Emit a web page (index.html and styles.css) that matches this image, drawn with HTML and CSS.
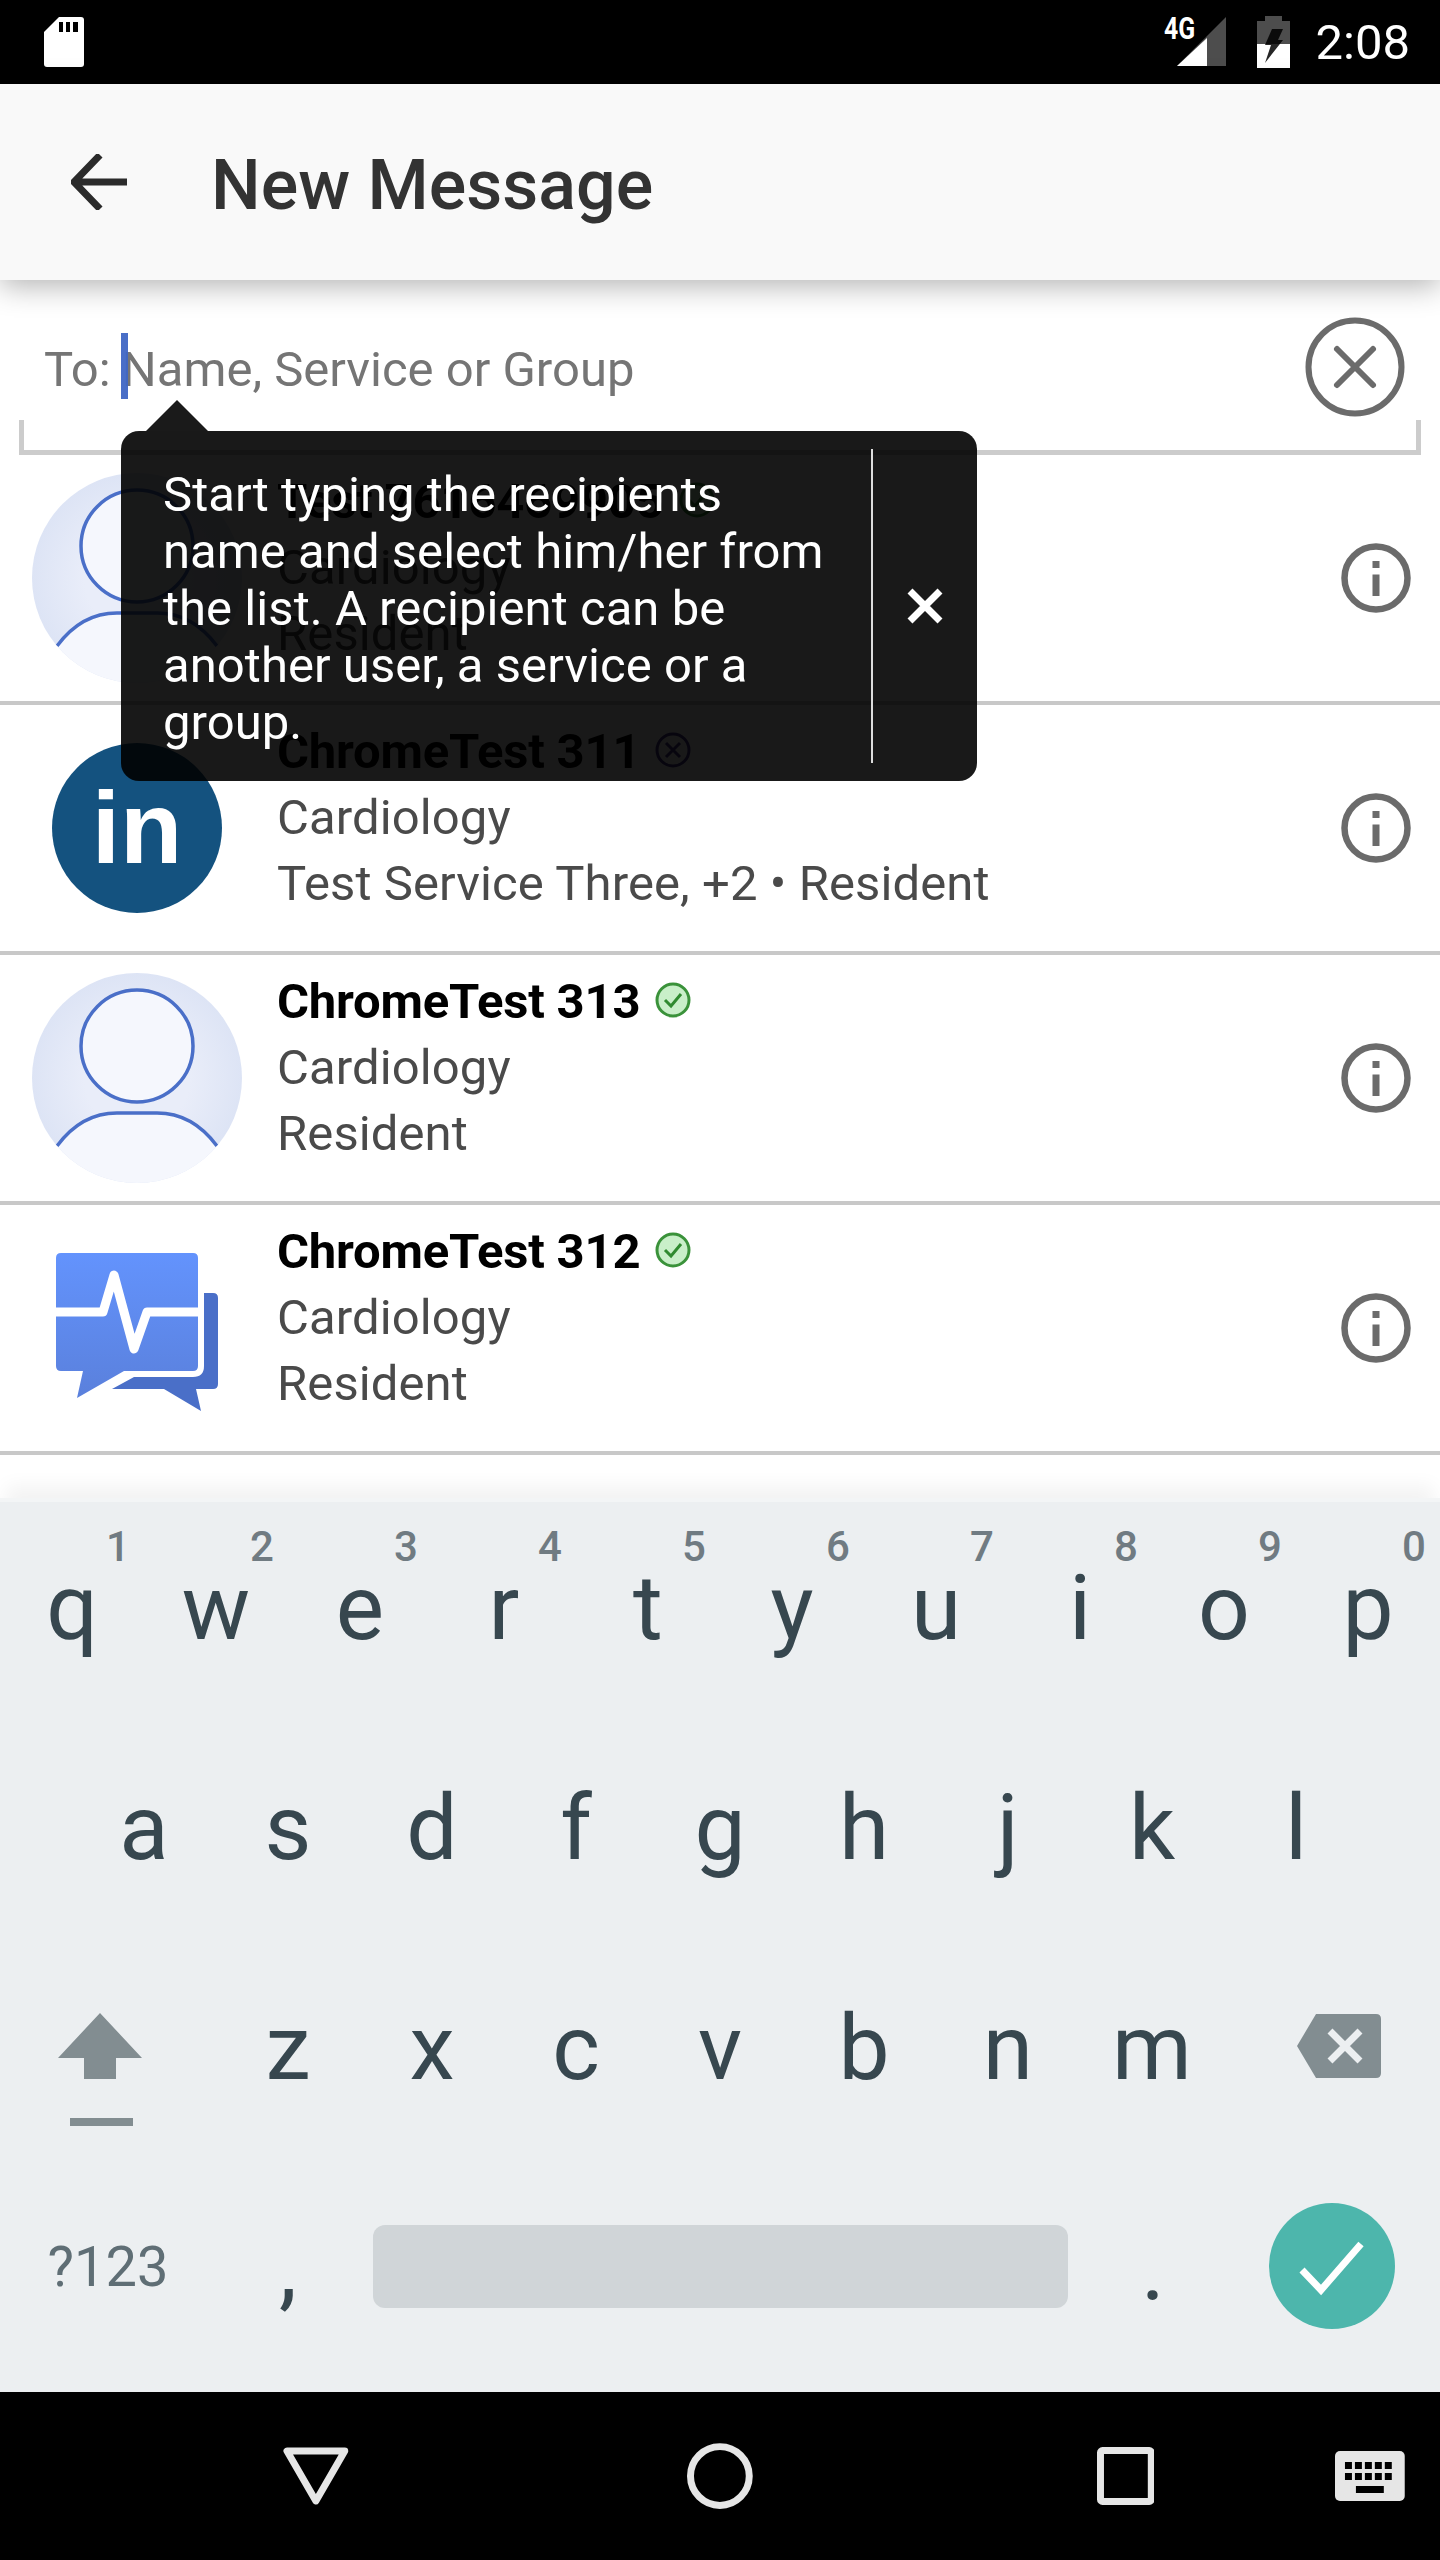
FILE: index.html
```html
<!DOCTYPE html>
<html lang="en">
<head>
    <meta charset="UTF-8">
    <title>New Message</title>
    <link rel="stylesheet" href="styles.css">
</head>
<body>
<div class="phone">
    <div class="status-bar">
        <svg class="sd-icon" width="40" height="50" viewBox="0 0 40 50"><path d="M15 0H37Q40 0 40 3V47Q40 50 37 50H3Q0 50 0 47V15Z" fill="#fff"/><path d="M15 5h4v10h-4zM22 5h4v10h-4zM29 5h5v10h-5z" fill="#000"/></svg>
        <div class="status-right">
            <div class="signal">
                <span class="net-type">4G</span>
                <svg width="50" height="50" viewBox="0 0 50 50"><path d="M49 0V49H0Z" fill="#4d4d4d"/><path d="M30 21V49H0Z" fill="#fff"/></svg>
            </div>
            <svg class="battery" width="33" height="52" viewBox="0 0 33 52"><path d="M8 0H25V5H33V52H0V5H8Z" fill="#4d4d4d"/><path d="M0 28H33V52H0Z" fill="#fff"/><path d="M15 13H26L21 24H26L8 47L14 29H8Z" fill="#000" opacity=".85"/></svg>
            <span class="clock">2:08</span>
        </div>
    </div>

    <div class="app-bar">
        <svg class="back-icon" width="56" height="56" viewBox="0 0 56 56"><path d="M2 28H56M29 1L3 28L29 55" fill="none" stroke="#2b2b2b" stroke-width="7"/></svg>
        <h1 class="title">New Message</h1>
    </div>

    <div class="to-field">
        <div class="to-row">
            <div class="to-text">To: <span class="cursor"></span>Name, Service or Group</div>
            <svg class="clear-icon" width="100" height="100" viewBox="0 0 100 100"><circle cx="50" cy="50" r="46.5" fill="none" stroke="#6b6b6b" stroke-width="6"/><path d="M32 32L68 68M68 32L32 68" stroke="#6b6b6b" stroke-width="6" stroke-linecap="round"/></svg>
        </div>
        <div class="to-bracket"></div>
    </div>

    <div class="list">
        <div class="row">
            <svg class="avatar" width="210" height="210" viewBox="0 0 210 210"><use href="#person"/></svg>
            <div class="info">
                <div class="name">Test 7616469905 <svg class="presence" width="36" height="36" viewBox="0 0 36 36"><use href="#online"/></svg></div>
                <div class="line">Cardiology</div>
                <div class="line">Resident</div>
            </div>
            <svg class="info-icon" width="72" height="72" viewBox="0 0 72 72"><use href="#info"/></svg>
        </div>
        <div class="row">
            <div class="avatar linkedin"><span class="in">in</span></div>
            <div class="info">
                <div class="name">ChromeTest 311 <svg class="presence" width="36" height="36" viewBox="0 0 36 36"><circle cx="18" cy="18" r="16" fill="none" stroke="#4a3a8a" stroke-width="3"/><path d="M11 11L25 25M25 11L11 25" stroke="#4a3a8a" stroke-width="3"/></svg></div>
                <div class="line">Cardiology</div>
                <div class="line">Test Service Three, +2 • Resident</div>
            </div>
            <svg class="info-icon" width="72" height="72" viewBox="0 0 72 72"><use href="#info"/></svg>
        </div>
        <div class="row">
            <svg class="avatar" width="210" height="210" viewBox="0 0 210 210"><use href="#person"/></svg>
            <div class="info">
                <div class="name">ChromeTest 313 <svg class="presence" width="36" height="36" viewBox="0 0 36 36"><use href="#online"/></svg></div>
                <div class="line">Cardiology</div>
                <div class="line">Resident</div>
            </div>
            <svg class="info-icon" width="72" height="72" viewBox="0 0 72 72"><use href="#info"/></svg>
        </div>
        <div class="row">
            <svg class="avatar" width="210" height="210" viewBox="0 0 210 210">
                <defs><linearGradient id="blue" x1="0" y1="0" x2="0" y2="1"><stop offset="0" stop-color="#6393fd"/><stop offset="1" stop-color="#5a80dc"/></linearGradient></defs>
                <path d="M80 166L102 154H161Q172 154 172 143V70H181Q186 70 186 75V161Q186 166 181 166H164L169 188L132 166Z" fill="#4a6fc8"/>
                <path d="M29 30H161Q166 30 166 35V143Q166 148 161 148H92L45 175L51 148H29Q24 148 24 143V35Q24 30 29 30Z" fill="url(#blue)"/>
                <path d="M24 89H71L82 52L102 126L115 89H166" fill="none" stroke="#fff" stroke-width="9" stroke-linejoin="round"/>
            </svg>
            <div class="info">
                <div class="name">ChromeTest 312 <svg class="presence" width="36" height="36" viewBox="0 0 36 36"><use href="#online"/></svg></div>
                <div class="line">Cardiology</div>
                <div class="line">Resident</div>
            </div>
            <svg class="info-icon" width="72" height="72" viewBox="0 0 72 72"><use href="#info"/></svg>
        </div>

        <div class="tooltip">
            <div class="tooltip-arrow"></div>
            <div class="tooltip-text">Start typing the recipients name and select him/her from the list. A recipient can be another user, a service or a group.</div>
            <div class="tooltip-close">
                <svg width="36" height="36" viewBox="0 0 36 36"><path d="M3 3L33 33M33 3L3 33" stroke="#fff" stroke-width="7"/></svg>
            </div>
        </div>
    </div>

    <div class="keyboard">
        <div class="key-row top-row">
            <div class="key"><sup class="hint">1</sup>q</div>
            <div class="key"><sup class="hint">2</sup>w</div>
            <div class="key"><sup class="hint">3</sup>e</div>
            <div class="key"><sup class="hint">4</sup>r</div>
            <div class="key"><sup class="hint">5</sup>t</div>
            <div class="key"><sup class="hint">6</sup>y</div>
            <div class="key"><sup class="hint">7</sup>u</div>
            <div class="key"><sup class="hint">8</sup>i</div>
            <div class="key"><sup class="hint">9</sup>o</div>
            <div class="key"><sup class="hint">0</sup>p</div>
        </div>
        <div class="key-row home-row">
            <div class="key">a</div>
            <div class="key">s</div>
            <div class="key">d</div>
            <div class="key">f</div>
            <div class="key">g</div>
            <div class="key">h</div>
            <div class="key">j</div>
            <div class="key">k</div>
            <div class="key">l</div>
        </div>
        <div class="key-row shift-row">
            <div class="key wide-key">
                <svg class="shift-icon" width="84" height="114" viewBox="0 0 84 114"><path d="M42 0L84 45H58V66H26V45H0Z" fill="#828d91"/><path d="M12 105H75V113H12Z" fill="#828d91"/></svg>
            </div>
            <div class="key">z</div>
            <div class="key">x</div>
            <div class="key">c</div>
            <div class="key">v</div>
            <div class="key">b</div>
            <div class="key">n</div>
            <div class="key">m</div>
            <div class="key wide-key">
                <svg class="backspace-icon" width="84" height="64" viewBox="0 0 84 64"><path d="M19 0H79Q84 0 84 5V59Q84 64 79 64H19L0 32Z" fill="#828d91"/><path d="M33 17L63 47M63 17L33 47" stroke="#eceff1" stroke-width="7"/></svg>
            </div>
        </div>
        <div class="bottom-row">
            <div class="sym-key">?123</div>
            <div class="punct-key">,</div>
            <div class="space-key"></div>
            <div class="punct-key">.</div>
            <div class="enter-key">
                <svg width="126" height="126" viewBox="0 0 126 126"><circle cx="63" cy="63" r="63" fill="#4db6ac"/><path d="M33 67L52 87L92 41" fill="none" stroke="#fff" stroke-width="7"/></svg>
            </div>
        </div>
    </div>

    <div class="nav-bar">
        <svg class="nav-back" width="66" height="58" viewBox="0 0 66 58"><path d="M4 4H62L33 54Z" fill="none" stroke="#e6e6e6" stroke-width="7" stroke-linejoin="round"/></svg>
        <svg class="nav-home" width="66" height="66" viewBox="0 0 66 66"><circle cx="33" cy="33" r="29.5" fill="none" stroke="#e6e6e6" stroke-width="7"/></svg>
        <svg class="nav-recent" width="58" height="58" viewBox="0 0 58 58"><rect x="3.5" y="3.5" width="51" height="51" rx="2" fill="none" stroke="#e6e6e6" stroke-width="7"/></svg>
        <svg class="nav-keyboard" width="70" height="50" viewBox="0 0 70 50"><rect width="70" height="50" rx="5" fill="#e6e6e6"/><path d="M10 11h7v7h-7zM20 11h7v7h-7zM30 11h7v7h-7zM40 11h7v7h-7zM50 11h7v7h-7zM10 22h7v7h-7zM20 22h7v7h-7zM30 22h7v7h-7zM40 22h7v7h-7zM50 22h7v7h-7zM21 35h28v7H21z" fill="#000"/></svg>
    </div>
</div>

<svg class="sprites" width="0" height="0">
    <defs>
        <clipPath id="disc"><circle cx="105" cy="105" r="105"/></clipPath>
        <radialGradient id="halo"><stop offset="0.5" stop-color="#e9edf9"/><stop offset="1" stop-color="#dde4f5"/></radialGradient>
        <g id="person">
            <circle cx="105" cy="105" r="105" fill="url(#halo)"/>
            <g clip-path="url(#disc)">
                <path d="M25 173C42 150 62 140 85 140H125C148 140 168 150 185 173V210H25Z" fill="#f5f7fd"/>
                <path d="M25 173C42 150 62 140 85 140H125C148 140 168 150 185 173" fill="none" stroke="#4a6fc8" stroke-width="3.5"/>
            </g>
            <circle cx="105" cy="73" r="56" fill="#f5f7fd" stroke="#4a6fc8" stroke-width="3.5"/>
        </g>
        <g id="online">
            <circle cx="18" cy="18" r="16" fill="#c9efc9" stroke="#3a923a" stroke-width="3"/>
            <path d="M10 18L16 24L26 12" fill="none" stroke="#2f8a2f" stroke-width="3"/>
        </g>
        <g id="info">
            <circle cx="36" cy="36" r="31.5" fill="none" stroke="#6b6b6b" stroke-width="6.5"/>
            <path d="M32.5 19H39.5V26H32.5ZM32.5 32.5H39.5V54H32.5Z" fill="#6b6b6b"/>
        </g>
    </defs>
</svg>
</body>
</html>
```

FILE: styles.css
```css
* {
    box-sizing: border-box;
}

body {
    margin: 0;
    background-color: #fff;
    font-family: Roboto, sans-serif;
}

.sprites {
    position: absolute;
}

.phone {
    width: 1440px;
    height: 2560px;
    display: flex;
    flex-direction: column;
    overflow: hidden;
}

/* status bar */
.status-bar {
    height: 84px;
    background-color: #000;
    display: flex;
    justify-content: space-between;
    align-items: flex-start;
    padding: 17px 30px 0 44px;
}

.status-right {
    display: flex;
    align-items: flex-start;
}

.signal {
    width: 62px;
    height: 50px;
    position: relative;
    display: flex;
    justify-content: flex-end;
}

.net-type {
    position: absolute;
    left: -1px;
    top: -7px;
    color: #fff;
    font-size: 31px;
    font-weight: 700;
    transform: scaleX(0.8);
    transform-origin: left top;
}

.battery {
    margin: -1px 0 0 30px;
}

.clock {
    margin-left: 26px;
    color: #fff;
    font-size: 49px;
    line-height: 52px;
}

/* app bar */
.app-bar {
    height: 196px;
    background-color: #f9f9f9;
    display: flex;
    align-items: center;
    padding-left: 71px;
    box-shadow: 0 6px 28px rgba(0, 0, 0, 0.3);
    position: relative;
    z-index: 1;
}

.back-icon {
    margin-top: -1px;
}

.title {
    margin: 6px 0 0 84px;
    font-size: 70px;
    font-weight: 500;
    color: #333;
    line-height: 80px;
}

/* to field */
.to-field {
    height: 175px;
    flex: none;
}

.to-row {
    height: 140px;
    padding: 0 35px 0 44px;
    display: flex;
    justify-content: space-between;
    align-items: flex-start;
}

.to-bracket {
    height: 35px;
    margin: 0 19px;
    border: solid #ccc;
    border-width: 0 5px 5px;
}

.to-text {
    font-size: 49px;
    color: #757575;
    margin-top: 60px;
    line-height: 60px;
    white-space: nowrap;
}

.cursor {
    display: inline-block;
    width: 7px;
    height: 66px;
    margin: -10px -6px -10px -2px;
    vertical-align: -3px;
    background-color: #3f66c4;
    opacity: 0.95;
}

.clear-icon {
    margin-top: 37px;
}

/* recipients */
.list {
    position: relative;
    height: 1043px;
    flex: none;
}

.row {
    height: 250px;
    border-bottom: 4px solid #c8c8c8;
    display: flex;
    align-items: center;
    padding: 0 28px 0 32px;
}

.avatar {
    flex: none;
    width: 210px;
    height: 210px;
}

.linkedin {
    display: flex;
    justify-content: center;
    align-items: center;
}

.in {
    width: 170px;
    height: 170px;
    border-radius: 50%;
    background-color: #14527f;
    color: #fff;
    font-family: "Liberation Sans", sans-serif;
    font-weight: 700;
    font-size: 102px;
    line-height: 170px;
    text-align: center;
}

.info {
    flex: 1;
    margin-left: 35px;
    padding-bottom: 20px;
}

.name {
    font-size: 49px;
    font-weight: 700;
    letter-spacing: -0.2px;
    color: #000;
    line-height: 66px;
    display: flex;
    align-items: center;
    gap: 15px;
}

.presence {
    margin-top: -4px;
}

.line {
    font-size: 49px;
    letter-spacing: 0.1px;
    color: #4a4a4a;
    line-height: 66px;
}

.info-icon {
    flex: none;
}

/* tooltip over the list */
.tooltip {
    position: absolute;
    left: 121px;
    top: -24px;
    width: 856px;
    height: 350px;
    background-color: rgba(0, 0, 0, 0.9);
    border-radius: 18px;
    display: flex;
    z-index: 2;
}

.tooltip-arrow {
    position: absolute;
    left: 25px;
    top: -31px;
    width: 0;
    height: 0;
    border-left: 31px solid transparent;
    border-right: 31px solid transparent;
    border-bottom: 31px solid #1a1a1a;
}

.tooltip-text {
    width: 750px;
    padding: 35px 38px 0 42px;
    font-size: 49px;
    letter-spacing: 0.05px;
    line-height: 57px;
    color: #fff;
}

.tooltip-close {
    flex: 1;
    margin: 18px 0;
    border-left: 2px solid #ddd;
    display: flex;
    justify-content: center;
    align-items: center;
}

/* keyboard */
.keyboard {
    height: 894px;
    flex: none;
    background-color: #eceff1;
    border-top: 4px solid #f3f5f6;
    box-shadow: 0 -18px 18px -6px rgba(0, 0, 0, 0.05);
    padding-top: 8px;
    color: #37474f;
    font-size: 91px;
    position: relative;
}

.key-row {
    height: 220px;
    display: grid;
    grid-auto-flow: column;
    grid-auto-columns: 144px;
}

.home-row {
    padding-left: 72px;
}

.shift-row {
    grid-auto-columns: auto;
    grid-template-columns: 216px repeat(7, 144px) 216px;
}

.key {
    position: relative;
    text-align: center;
    padding-top: 48px;
    line-height: 100px;
}

.hint {
    position: absolute;
    left: 100px;
    top: 13px;
    width: 36px;
    font-size: 42px;
    font-weight: 500;
    line-height: 48px;
    color: #707b82;
}

.wide-key {
    padding-top: 0;
}

.shift-icon {
    margin: 63px 0 0 -16px;
}

.backspace-icon {
    margin: 64px 0 0 14px;
}

.bottom-row {
    display: flex;
    align-items: center;
    height: 190px;
    margin-top: 1px;
}

.sym-key {
    width: 216px;
    padding-top: 2px;
    text-align: center;
    font-size: 56px;
    color: #5f6e75;
}

.punct-key {
    width: 144px;
    padding-top: 4px;
    text-align: center;
    line-height: 100px;
}

.space-key {
    width: 695px;
    height: 83px;
    margin: 0 13px;
    background-color: #d0d5d8;
    border-radius: 12px;
}

.enter-key {
    margin-left: 44px;
    height: 126px;
}

/* nav bar */
.nav-bar {
    height: 168px;
    flex: none;
    background-color: #000;
    display: flex;
    align-items: center;
    padding: 0 35px 0 283px;
}

.nav-home {
    margin-left: 338px;
}

.nav-recent {
    margin-left: 344px;
}

.nav-keyboard {
    margin-left: 181px;
}
```
